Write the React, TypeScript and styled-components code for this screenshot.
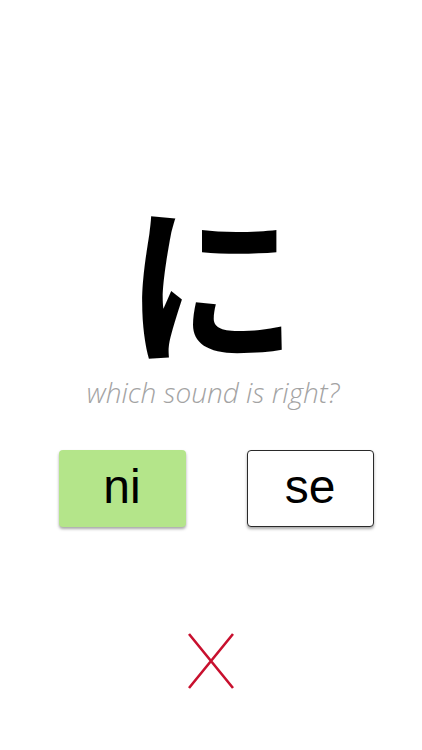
import styled, { createGlobalStyle } from "styled-components";

const GlobalStyle = createGlobalStyle`
  html, body {
    margin: 0;
    padding: 0;
    background: #ffffff;
  }
`;

const Page = styled.div`
  width: 422px;
  height: 750px;
  display: flex;
  flex-direction: column;
  align-items: center;
  background: #ffffff;
  font-family: "Liberation Sans", Arial, sans-serif;
`;

const Kana = styled.div`
  margin-top: 196px;
  height: 160px;
  line-height: 160px;
  font-size: 173px;
  font-weight: 700;
  color: #000;
  font-family: "Noto Sans CJK JP", sans-serif;
`;

const Prompt = styled.div`
  margin-top: 21px;
  margin-left: 4px;
  font-family: "Open Sans", sans-serif;
  font-weight: 300;
  font-style: italic;
  font-size: 28px;
  line-height: 30px;
  color: #a3a3a3;
`;

const Choices = styled.div`
  margin-top: 43px;
  margin-left: 10px;
  display: flex;
  gap: 61px;
`;

const Choice = styled.button<{ $correct?: boolean }>`
  width: 127px;
  height: 77px;
  border-radius: 4px;
  border: ${(p) => (p.$correct ? "none" : "1px solid #2a2a2a")};
  background: ${(p) => (p.$correct ? "#b4e58a" : "#ffffff")};
  box-shadow: 0 2px 3px rgba(0, 0, 0, 0.35);
  font-family: "Liberation Sans", Arial, sans-serif;
  font-size: 48px;
  color: #000;
  padding: 0 0 4px;
  display: flex;
  align-items: center;
  justify-content: center;
`;

const Wrong = styled.div`
  margin-top: 106px;
  width: 46px;
  height: 56px;
`;

export default function App() {
  return (
    <>
      <GlobalStyle />
      <Page>
        <Kana>に</Kana>
        <Prompt>which sound is right?</Prompt>
        <Choices>
          <Choice $correct>ni</Choice>
          <Choice>se</Choice>
        </Choices>
        <Wrong>
          <svg width="46" height="56" viewBox="0 0 46 56">
            <path
              d="M1 1 L45 55 M45 1 L1 55"
              stroke="#c8102e"
              strokeWidth="2.6"
              fill="none"
            />
          </svg>
        </Wrong>
      </Page>
    </>
  );
}
